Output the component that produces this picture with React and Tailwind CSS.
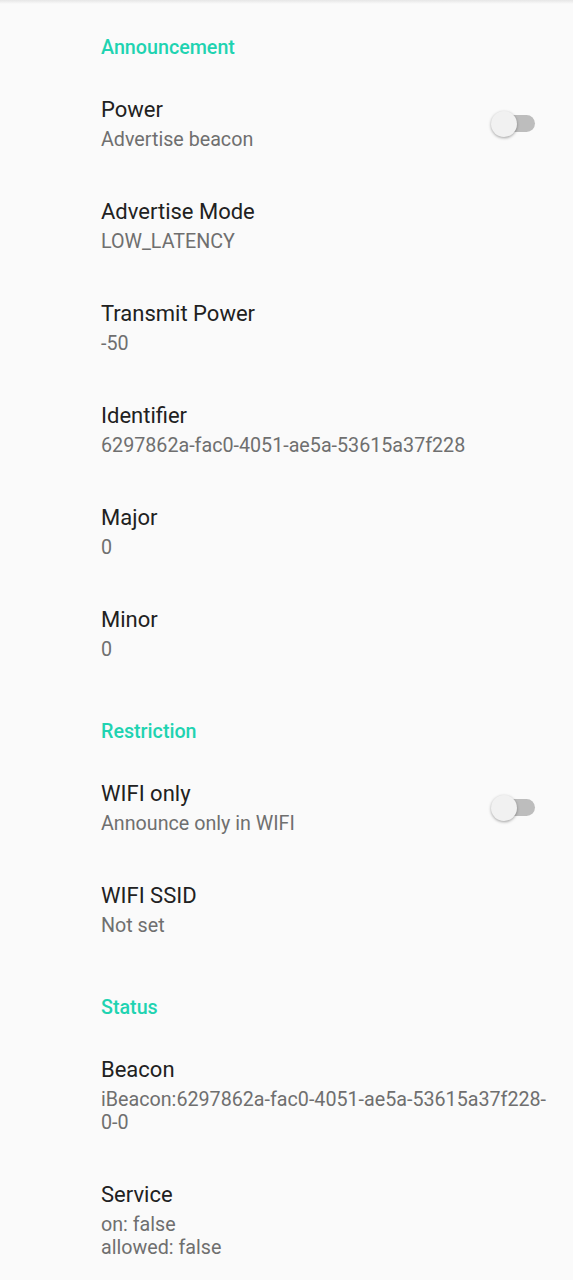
import React from "react";

const TEAL = "text-[#1fd3b1]";

const SectionHeader = ({ title }) => (
  <div className="pl-[101px] pt-[36px] pb-[12px]">
    <h2 className={`text-[19.7px] leading-[24px] font-medium ${TEAL}`}>{title}</h2>
  </div>
);

const Switch = () => (
  <div className="relative w-[44px] h-[28px] mr-[22px] flex items-center">
    <div className="absolute left-[6px] w-[38px] h-[17px] rounded-full bg-[#bdbdbd]" />
    <div className="absolute left-0 w-[26px] h-[26px] rounded-full bg-[#f1f1f1] shadow-[0_1px_3px_rgba(0,0,0,0.35)]" />
  </div>
);

const Pref = ({ title, lines, toggle }) => (
  <div className="flex items-center pl-[101px] pr-[16px] pt-[24px] pb-[23px]">
    <div className="flex-1 min-w-0">
      <div className="text-[22px] leading-[28px] text-[#212121]">{title}</div>
      <div className="mt-[4px] text-[19.7px] leading-[23px] text-[#6f6f6f] break-words">
        {lines.map((l, i) => (
          <div key={i}>{l}</div>
        ))}
      </div>
    </div>
    {toggle && <Switch />}
  </div>
);

export default function App() {
  return (
    <div
      className="min-h-screen w-[573px] bg-[#fafafa] relative"
      style={{ fontFamily: "Roboto, 'Noto Sans', sans-serif" }}
    >
      <div className="absolute top-0 left-0 right-0 h-[4px] bg-gradient-to-b from-[#e6e6e6] to-[#fafafa]" />

      <SectionHeader title="Announcement" />
      <Pref title="Power" lines={["Advertise beacon"]} toggle />
      <Pref title="Advertise Mode" lines={["LOW_LATENCY"]} />
      <Pref title="Transmit Power" lines={["-50"]} />
      <Pref title="Identifier" lines={["6297862a-fac0-4051-ae5a-53615a37f228"]} />
      <Pref title="Major" lines={["0"]} />
      <Pref title="Minor" lines={["0"]} />

      <SectionHeader title="Restriction" />
      <Pref title="WIFI only" lines={["Announce only in WIFI"]} toggle />
      <Pref title="WIFI SSID" lines={["Not set"]} />

      <SectionHeader title="Status" />
      <Pref title="Beacon" lines={["iBeacon:6297862a-fac0-4051-ae5a-53615a37f228-0-0"]} />
      <Pref title="Service" lines={["on: false", "allowed: false"]} />
    </div>
  );
}
